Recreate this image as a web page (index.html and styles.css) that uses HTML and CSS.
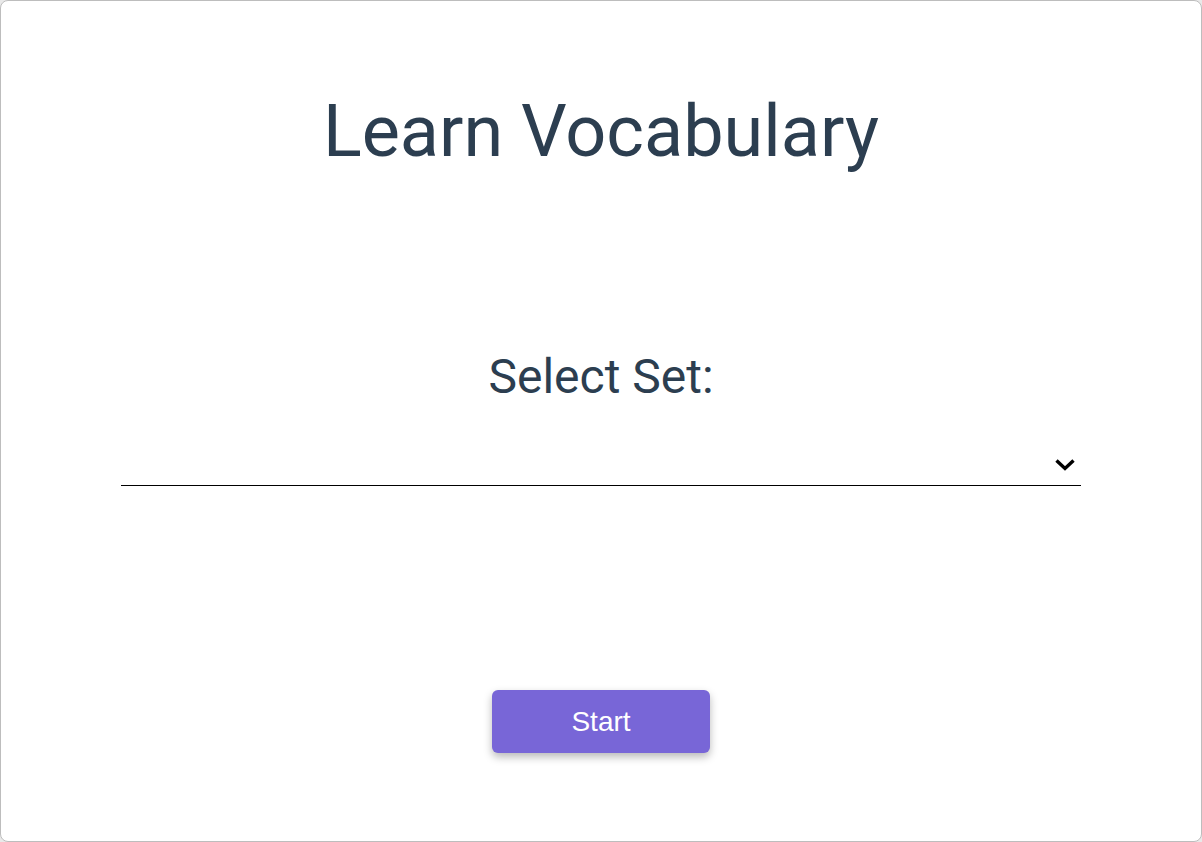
FILE: index.html
```html
<!DOCTYPE html>
<html>
<head>
<meta charset="utf-8">
<link rel="stylesheet" href="styles.css">
</head>
<body>
<div class="card">
  <h1 class="title">Learn Vocabulary</h1>
  <div class="set">
    <h2 class="set-label">Select Set:</h2>
    <div class="select">
      <span class="select-value"></span>
      <svg class="chev" width="22" height="14" viewBox="0 0 22 14"><path d="M2.5 2.5 L11 10.5 L19.5 2.5" fill="none" stroke="#000" stroke-width="3.4"/></svg>
    </div>
  </div>
  <div class="actions">
    <button class="start">Start</button>
  </div>
</div>
</body>
</html>
```
FILE: styles.css
```css
html, body {
  margin: 0;
  padding: 0;
  background: #e9e9e9;
}
body {
  width: 1202px;
  height: 842px;
  font-family: Roboto, "Liberation Sans", sans-serif;
}
.card {
  box-sizing: border-box;
  width: 1202px;
  height: 842px;
  background: #fff;
  border: 1px solid #bdbdbd;
  border-radius: 8px;
  padding: 0 120px;
  display: flex;
  flex-direction: column;
  align-items: stretch;
}
.title {
  margin: 86px 0 0;
  text-align: center;
  font-weight: 400;
  font-size: 72px;
  line-height: 90px;
  color: #2c3e50;
}
.set {
  margin-top: 170px;
}
.set-label {
  margin: 0;
  text-align: center;
  font-weight: 400;
  font-size: 48px;
  line-height: 60px;
  color: #2c3e50;
}
.select {
  margin-top: 38px;
  height: 40px;
  border-bottom: 1px solid #000;
  display: flex;
  justify-content: flex-end;
  align-items: center;
  padding-right: 5px;
}
.chev {
  display: block;
}
.actions {
  display: flex;
  justify-content: center;
  margin-top: 204px;
}
.start {
  width: 218px;
  height: 63px;
  border: none;
  border-radius: 6px;
  background: #7866d7;
  color: #fff;
  font-family: "Liberation Sans", Arial, sans-serif;
  font-size: 28px;
  box-shadow: 0 4px 8px rgba(0,0,0,0.28);
  cursor: pointer;
}
```
